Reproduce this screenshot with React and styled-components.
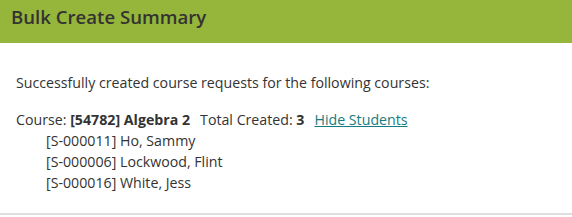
import React from 'react';
import styled, { createGlobalStyle } from 'styled-components';

const GlobalStyle = createGlobalStyle`
    body {
        margin: 0;
        background: #fff;
        font-family: "Open Sans", Lato, Arial, sans-serif;
        color: #333;
    }
`;

const Panel = styled.section`
    width: 572px;
    height: 213px;
    border-bottom: 2px solid #dedede;
    background: #fff;
`;

const Header = styled.header`
    height: 43px;
    background: #95b63a;
    display: flex;
    align-items: center;
    padding: 0 11px;
    box-sizing: border-box;
`;

const Title = styled.h2`
    margin: 0 0 10px 0;
    font-size: 18.6px;
    font-weight: 600;
    color: #333;
`;

const Body = styled.div`
    padding: 30px 16px 0 16px;
    font-size: 14.2px;
`;

const Intro = styled.p`
    margin: 0 0 16px 0;
    line-height: 20px;
`;

const CourseLine = styled.div`
    line-height: 21px;
    display: flex;
    gap: 10px;
    align-items: baseline;
`;

const Strong = styled.b`
    font-weight: 700;
`;

const Link = styled.a`
    color: #177c80;
    text-decoration: underline;
    cursor: pointer;
`;

const StudentList = styled.ul`
    list-style: none;
    margin: 0;
    padding: 0 0 0 30px;
`;

const Student = styled.li`
    line-height: 21px;
`;

const students = [
    '[S-000011] Ho, Sammy',
    '[S-000006] Lockwood, Flint',
    '[S-000016] White, Jess',
];

export default function App() {
    return (
        <>
            <GlobalStyle />
            <Panel>
                <Header>
                    <Title>Bulk Create Summary</Title>
                </Header>
                <Body>
                    <Intro>Successfully created course requests for the following courses:</Intro>
                    <CourseLine>
                        <span>Course: <Strong>[54782] Algebra 2</Strong></span>
                        <span>Total Created: <Strong>3</Strong></span>
                        <Link>Hide Students</Link>
                    </CourseLine>
                    <StudentList>
                        {students.map(s => <Student key={s}>{s}</Student>)}
                    </StudentList>
                </Body>
            </Panel>
        </>
    );
}
